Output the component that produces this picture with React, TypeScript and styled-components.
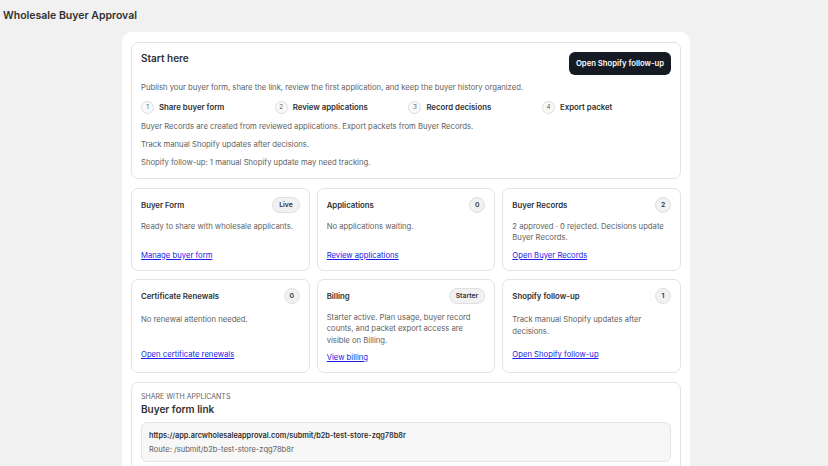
import React from 'react';
import styled, { createGlobalStyle } from 'styled-components';

const GlobalStyle = createGlobalStyle`
  html, body {
    margin: 0;
    padding: 0;
    background: #f1f1f1;
  }
  body {
    font-family: Inter, "Noto Sans", "Liberation Sans", sans-serif;
    color: #303030;
    -webkit-font-smoothing: antialiased;
  }
`;

type CardInfo = {
  title: string;
  badge: string;
  pill?: boolean;
  text: string;
  link: string;
};

const cards: CardInfo[] = [
  { title: 'Buyer Form', badge: 'Live', pill: true, text: 'Ready to share with wholesale applicants.', link: 'Manage buyer form' },
  { title: 'Applications', badge: '0', text: 'No applications waiting.', link: 'Review applications' },
  { title: 'Buyer Records', badge: '2', text: '2 approved · 0 rejected. Decisions update Buyer Records.', link: 'Open Buyer Records' },
  { title: 'Certificate Renewals', badge: '0', text: 'No renewal attention needed.', link: 'Open certificate renewals' },
  { title: 'Billing', badge: 'Starter', pill: true, text: 'Starter active. Plan usage, buyer record counts, and packet export access are visible on Billing.', link: 'View billing' },
  { title: 'Shopify follow-up', badge: '1', text: 'Track manual Shopify updates after decisions.', link: 'Open Shopify follow-up' },
];

const steps = ['Share buyer form', 'Review applications', 'Record decisions', 'Export packet'];

export default function App() {
  return (
    <>
      <GlobalStyle />
      <TopBar>Wholesale Buyer Approval</TopBar>
      <PageWrap>
        <Panel>
          <StartCard>
            <StartHeader>
              <StartTitle>Start here</StartTitle>
              <DarkButton>Open Shopify follow-up</DarkButton>
            </StartHeader>
            <Muted>Publish your buyer form, share the link, review the first application, and keep the buyer history organized.</Muted>
            <Steps>
              {steps.map((s, i) => (
                <Step key={s}>
                  <StepNum>{i + 1}</StepNum>
                  <StepLabel>{s}</StepLabel>
                </Step>
              ))}
            </Steps>
            <Muted>Buyer Records are created from reviewed applications. Export packets from Buyer Records.</Muted>
            <Muted>Track manual Shopify updates after decisions.</Muted>
            <Muted>Shopify follow-up: 1 manual Shopify update may need tracking.</Muted>
          </StartCard>

          <CardGrid>
            {cards.map((c) => (
              <Card key={c.title}>
                <CardHeader>
                  <CardTitle>{c.title}</CardTitle>
                  <Badge $pill={!!c.pill}>{c.badge}</Badge>
                </CardHeader>
                <CardBody>
                  <CardText>{c.text}</CardText>
                  <CardLink href="#">{c.link}</CardLink>
                </CardBody>
              </Card>
            ))}
          </CardGrid>

          <ShareCard>
            <Eyebrow>Share with applicants</Eyebrow>
            <ShareTitle>Buyer form link</ShareTitle>
            <LinkBox>
              <Url>https://app.arcwholesaleapproval.com/submit/b2b-test-store-zqg78b8r</Url>
              <Route>Route: /submit/b2b-test-store-zqg78b8r</Route>
            </LinkBox>
          </ShareCard>
        </Panel>
      </PageWrap>
    </>
  );
}

const TopBar = styled.div`
  height: 31px;
  padding-left: 3px;
  display: flex;
  align-items: center;
  font-size: 10.5px;
  font-weight: 600;
  color: #303030;
`;

const PageWrap = styled.div`
  display: flex;
  justify-content: center;
  padding-right: 16px;
  padding-top: 1px;
`;

const Panel = styled.div`
  width: 550px;
  background: #ffffff;
  border-radius: 10px 10px 0 0;
  padding: 10px 9px 9px;
  display: flex;
  flex-direction: column;
  gap: 9px;
`;

const Box = styled.div`
  background: #ffffff;
  border: 1px solid #e3e3e3;
  border-radius: 7px;
`;

const StartCard = styled(Box)`
  padding: 9px 9px 9px;
  display: flex;
  flex-direction: column;
  gap: 6.5px;
`;

const StartHeader = styled.div`
  display: flex;
  justify-content: space-between;
  align-items: flex-start;
`;

const StartTitle = styled.div`
  font-size: 10px;
  font-weight: 600;
  line-height: 13px;
`;

const DarkButton = styled.button`
  height: 23px;
  width: 102px;
  border: none;
  border-radius: 6px;
  background: #151a25;
  color: #ffffff;
  font-family: inherit;
  font-size: 7.7px;
  font-weight: 600;
  padding: 0;
`;

const Muted = styled.div`
  font-size: 7.7px;
  line-height: 11.5px;
  color: #616161;
`;

const Steps = styled.div`
  display: grid;
  grid-template-columns: repeat(4, 133.7px);
  min-height: 15px;
`;

const Step = styled.div`
  display: flex;
  align-items: center;
  gap: 5px;
`;

const StepNum = styled.span`
  box-sizing: border-box;
  width: 13px;
  height: 13px;
  border-radius: 50%;
  border: 1px solid #dcdcdc;
  background: #f9f9f9;
  display: flex;
  align-items: center;
  justify-content: center;
  font-size: 6.3px;
  color: #616161;
`;

const StepLabel = styled.span`
  font-size: 7.8px;
  font-weight: 600;
  color: #303030;
`;

const CardGrid = styled.div`
  display: grid;
  grid-template-columns: repeat(3, 1fr);
  column-gap: 7px;
  row-gap: 8px;
`;

const Card = styled(Box)`
  padding: 8px 9px 8px;
  display: flex;
  flex-direction: column;
`;

const CardHeader = styled.div`
  display: flex;
  justify-content: space-between;
  align-items: flex-start;
  min-height: 17px;
`;

const CardTitle = styled.div`
  font-size: 7.8px;
  font-weight: 600;
  line-height: 12px;
  padding-top: 2px;
`;

const Badge = styled.span<{ $pill: boolean }>`
  height: 16px;
  min-width: 16px;
  box-sizing: border-box;
  padding: 0 ${(p) => (p.$pill ? '6px' : '0')};
  border-radius: 8px;
  border: 1px solid #e0e0e0;
  background: #f1f1f1;
  display: flex;
  align-items: center;
  justify-content: center;
  font-size: 6.8px;
  font-weight: 600;
  color: #303030;
`;

const CardBody = styled.div`
  flex: 1;
  display: flex;
  flex-direction: column;
  justify-content: space-around;
  padding-top: 7px;
  gap: 6px;
`;

const CardText = styled.div`
  font-size: 7.7px;
  line-height: 11.5px;
  min-height: 23px;
  color: #616161;
`;

const CardLink = styled.a`
  font-size: 7.7px;
  line-height: 12px;
  color: #2020e8;
  text-decoration: underline;
`;

const ShareCard = styled(Box)`
  padding: 9px 9px 9px;
  display: flex;
  flex-direction: column;
`;

const Eyebrow = styled.div`
  font-size: 7px;
  line-height: 10px;
  text-transform: uppercase;
  color: #616161;
`;

const ShareTitle = styled.div`
  font-size: 10px;
  font-weight: 600;
  line-height: 14px;
  margin-bottom: 6px;
`;

const LinkBox = styled.div`
  background: #f7f7f7;
  border: 1px solid #e3e3e3;
  border-radius: 6px;
  padding: 7px 7px 6px;
  display: flex;
  flex-direction: column;
  gap: 2px;
`;

const Url = styled.div`
  font-size: 7.35px;
  font-weight: 600;
  line-height: 11.5px;
  color: #303030;
`;

const Route = styled.div`
  font-size: 7.6px;
  line-height: 11px;
  color: #616161;
`;
